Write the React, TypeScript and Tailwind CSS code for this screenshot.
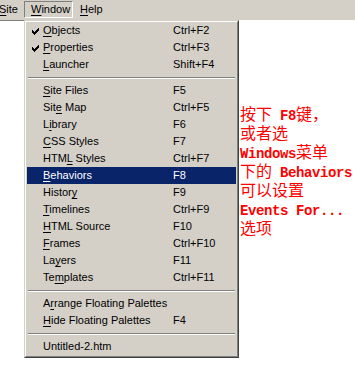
import React from 'react';

type Item =
  | { kind: 'item'; label: string; mn?: number; key?: string; checked?: boolean; active?: boolean }
  | { kind: 'sep' };

const items: Item[] = [
  { kind: 'item', label: 'Objects', mn: 0, key: 'Ctrl+F2', checked: true },
  { kind: 'item', label: 'Properties', mn: 0, key: 'Ctrl+F3', checked: true },
  { kind: 'item', label: 'Launcher', mn: 0, key: 'Shift+F4' },
  { kind: 'sep' },
  { kind: 'item', label: 'Site Files', mn: 0, key: 'F5' },
  { kind: 'item', label: 'Site Map', mn: 3, key: 'Ctrl+F5' },
  { kind: 'item', label: 'Library', mn: 1, key: 'F6' },
  { kind: 'item', label: 'CSS Styles', mn: 0, key: 'F7' },
  { kind: 'item', label: 'HTML Styles', mn: 3, key: 'Ctrl+F7' },
  { kind: 'item', label: 'Behaviors', mn: 0, key: 'F8', active: true },
  { kind: 'item', label: 'History', mn: 6, key: 'F9' },
  { kind: 'item', label: 'Timelines', mn: 0, key: 'Ctrl+F9' },
  { kind: 'item', label: 'HTML Source', mn: 0, key: 'F10' },
  { kind: 'item', label: 'Frames', mn: 0, key: 'Ctrl+F10' },
  { kind: 'item', label: 'Layers', mn: 2, key: 'F11' },
  { kind: 'item', label: 'Templates', mn: 2, key: 'Ctrl+F11' },
  { kind: 'sep' },
  { kind: 'item', label: 'Arrange Floating Palettes', mn: 1 },
  { kind: 'item', label: 'Hide Floating Palettes', mn: 0, key: 'F4' },
  { kind: 'sep' },
  { kind: 'item', label: 'Untitled-2.htm' },
];

// underline the mnemonic letter
const Mn = ({ text, at }: { text: string; at?: number }) => {
  if (at === undefined) return <>{text}</>;
  return (
    <>
      {text.slice(0, at)}
      <span className="underline underline-offset-[2px]">{text[at]}</span>
      {text.slice(at + 1)}
    </>
  );
};

const Check = () => (
  <svg width="7" height="7" viewBox="0 0 7 7" className="absolute left-[5px] top-[6px]">
    <path d="M0 2h1v1h1v1h1V3h1V2h1V1h1V0h1v3H6v1H5v1H4v1H3v1H2V6H1V5H0z" fill="currentColor" />
  </svg>
);

const Latin = ({ children }: { children: React.ReactNode }) => (
  <span className="font-['Liberation_Mono',monospace] text-[14px] tracking-[-0.4px] font-bold leading-none">{children}</span>
);

export default function App() {
  return (
    <div className="relative w-[355px] h-[366px] overflow-hidden bg-white text-black font-['Liberation_Sans',Arial,sans-serif] text-[11px]">
      {/* menu bar */}
      <div className="flex h-[20px] items-start bg-[#d4d0c8] pt-[1px]">
        <div className="-ml-[1px] w-[25px] leading-[17px]">
          <Mn text="Site" at={0} />
        </div>
        <div className="h-[17px] w-[49px] border border-t-[#808080] border-l-[#808080] border-r-white border-b-white pl-[6px] leading-[15px]">
          <Mn text="Window" at={0} />
        </div>
        <div className="ml-[7px] leading-[17px]">
          <Mn text="Help" at={0} />
        </div>
      </div>

      {/* document area */}
      <div className="pl-[240px] pt-[84px] text-[16px] leading-[19px] text-[#ff0000] font-['Noto_Sans_CJK_SC',sans-serif]">
        <div className="h-[19px] whitespace-nowrap">按下<Latin> F8</Latin>键，</div>
        <div className="h-[19px] whitespace-nowrap">或者选</div>
        <div className="h-[19px] whitespace-nowrap"><Latin>Windows</Latin>菜单</div>
        <div className="h-[19px] whitespace-nowrap">下的<Latin> Behaviors</Latin></div>
        <div className="h-[19px] whitespace-nowrap">可以设置</div>
        <div className="h-[19px] whitespace-nowrap"><Latin>Events For...</Latin></div>
        <div className="h-[19px] whitespace-nowrap">选项</div>
      </div>

      <div className="absolute left-0 top-[20px] h-px w-[24px] bg-[#808080]" />

      {/* dropdown */}
      <div className="absolute left-[24px] top-[20px] w-[215px] border border-t-[#d4d0c8] border-l-[#d4d0c8] border-r-[#404040] border-b-[#404040]">
        <div className="border border-t-white border-l-white border-r-[#808080] border-b-[#808080] bg-[#d4d0c8] px-[1px] pb-[1px]">
          {items.map((it, i) =>
            it.kind === 'sep' ? (
              <div key={i} className="flex h-[9px] flex-col justify-center px-[1px]">
                <div className="h-px bg-[#808080]" />
                <div className="h-px bg-white" />
              </div>
            ) : (
              <div
                key={i}
                className={
                  'relative flex h-[17px] items-center pl-[16px] ' +
                  (it.active ? 'bg-[#0a246a] text-white' : '')
                }
              >
                {it.checked && <Check />}
                <span className="w-[130px] whitespace-nowrap">
                  <Mn text={it.label} at={it.mn} />
                </span>
                {it.key && <span className="whitespace-nowrap">{it.key}</span>}
              </div>
            )
          )}
        </div>
      </div>
    </div>
  );
}
